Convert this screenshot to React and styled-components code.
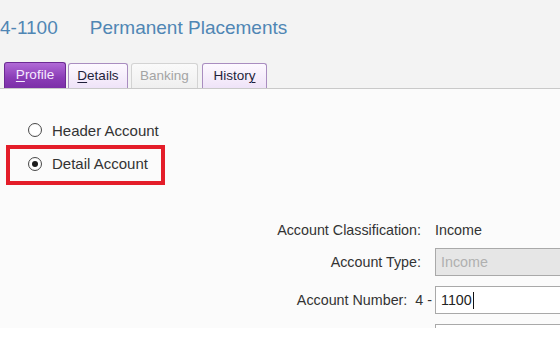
import React from 'react'
import styled, { createGlobalStyle, css } from 'styled-components'

const GlobalStyle = createGlobalStyle`
    html, body {
        margin: 0;
        padding: 0;
        background: #ffffff;
    }

    body {
        font-family: 'Liberation Sans', Arial, sans-serif;
        color: #333333;
    }

    * {
        box-sizing: border-box;
    }
`

const Page = styled.div`
    width: 560px;
    height: 341px;
    overflow: hidden;
    display: flex;
    flex-direction: column;
`

const Header = styled.div`
    background: #f3f3f3;
    padding-top: 16px;
`

const Title = styled.h1`
    margin: 0;
    display: flex;
    gap: 32px;
    font-size: 19px;
    font-weight: normal;
    color: #4f86b4;
    line-height: 24px;
    height: 24px;
`

const TabBar = styled.div`
    display: flex;
    align-items: flex-end;
    margin-top: 24px;
    padding-left: 4px;
    height: 25px;
    border-bottom: 1px solid #c9c9c9;
`

const tabLooks = {
    active: css`
        background: linear-gradient(#b06ad6, #8a3cb6 60%, #7b2fa7);
        border-color: #6b2a93;
        color: #f6eaff;
        height: 26px;
    `,
    normal: css`
        background: linear-gradient(#fdf9ff, #efe3f8);
        border-color: #a98dc0;
        color: #1f1f3a;
    `,
    disabled: css`
        background: linear-gradient(#fafafa, #efefef);
        border-color: #d3d3d3;
        color: #a4a4a4;
    `
}

const Tab = styled.div`
    width: ${props => props.$w}px;
    margin-right: ${props => props.$gap || 0}px;
    height: 25px;
    border: 1px solid;
    border-bottom: none;
    border-radius: 3px 3px 0 0;
    font-size: 13.5px;
    line-height: 24px;
    text-align: center;
    ${props => tabLooks[props.$look]}

    u {
        text-decoration-thickness: 1px;
        text-underline-offset: 2px;
    }
`

const Content = styled.div`
    height: 239px;
    overflow: hidden;
    background: #fbfbfb;
    padding: 31px 0 0 6px;
`

const Footer = styled.div`
    flex: 1;
    background: #ffffff;
`

const RadioRow = styled.label`
    display: flex;
    align-items: center;
    gap: 10px;
    height: 20px;
    padding-left: 22px;
    font-size: 15px;
    color: #333333;
`

const Highlight = styled.div`
    width: 159px;
    height: 40px;
    margin-top: 5px;
    border: 4px solid #e41d29;
    display: flex;
    align-items: center;
    padding-bottom: 3px;

    ${RadioRow} {
        padding-left: 18px;
    }
`

const RadioCircle = styled.span`
    width: 14px;
    height: 14px;
    border-radius: 50%;
    border: 1px solid #4a4a4a;
    background: radial-gradient(circle, #ffffff 55%, #e4e4e4);
    display: flex;
    align-items: center;
    justify-content: center;

    &::after {
        content: '';
        width: 6px;
        height: 6px;
        border-radius: 50%;
        background: #1d1d1d;
        display: ${props => (props.$checked ? 'block' : 'none')};
    }
`

const Form = styled.div`
    margin-top: 31px;
    margin-left: -6px;
    display: flex;
    flex-direction: column;
`

const FormRow = styled.div`
    display: flex;
    align-items: center;
    height: 28px;
    margin-top: ${props => props.$gap || 0}px;
`

const Label = styled.div`
    width: 435px;
    flex-shrink: 0;
    text-align: right;
    padding-right: ${props => (props.$tight ? 3 : 14)}px;
    font-size: 14.3px;
    color: #333333;
    white-space: nowrap;
`

const Prefix = styled.span`
    margin-left: 8px;
`

const Value = styled.div`
    font-size: 14.3px;
    color: #333333;
`

const Input = styled.div`
    flex: 1;
    height: 28px;
    margin-right: -20px;
    border: 1px solid #a9a9a9;
    padding-left: 5px;
    display: flex;
    align-items: center;
    font-size: 14.3px;
    background: ${props => (props.$disabled ? '#e6e6e6' : '#ffffff')};
    color: ${props => (props.$disabled ? '#b0b0b0' : '#222222')};
`

const Caret = styled.span`
    display: inline-block;
    width: 1px;
    height: 17px;
    background: #111111;
    margin-left: 1px;
`

export default function App() {
    return (
        <Page>
            <GlobalStyle />
            <Header>
                <Title>
                    <span>4-1100</span>
                    <span>Permanent Placements</span>
                </Title>
                <TabBar>
                    <Tab $look="active" $w={62} $gap={2}>
                        <u>P</u>rofile
                    </Tab>
                    <Tab $look="normal" $w={60} $gap={3}>
                        <u>D</u>etails
                    </Tab>
                    <Tab $look="disabled" $w={67} $gap={4}>
                        Banking
                    </Tab>
                    <Tab $look="normal" $w={65}>
                        Histor<u>y</u>
                    </Tab>
                </TabBar>
            </Header>
            <Content>
                <RadioRow>
                    <RadioCircle />
                    Header Account
                </RadioRow>
                <Highlight>
                    <RadioRow>
                        <RadioCircle $checked />
                        Detail Account
                    </RadioRow>
                </Highlight>
                <Form>
                    <FormRow>
                        <Label>Account Classification:</Label>
                        <Value>Income</Value>
                    </FormRow>
                    <FormRow $gap={4}>
                        <Label>Account Type:</Label>
                        <Input $disabled>Income</Input>
                    </FormRow>
                    <FormRow $gap={10}>
                        <Label $tight>
                            Account Number:<Prefix>4 -</Prefix>
                        </Label>
                        <Input>
                            1100
                            <Caret />
                        </Input>
                    </FormRow>
                    <FormRow $gap={10}>
                        <Label />
                        <Input />
                    </FormRow>
                </Form>
            </Content>
            <Footer />
        </Page>
    )
}
